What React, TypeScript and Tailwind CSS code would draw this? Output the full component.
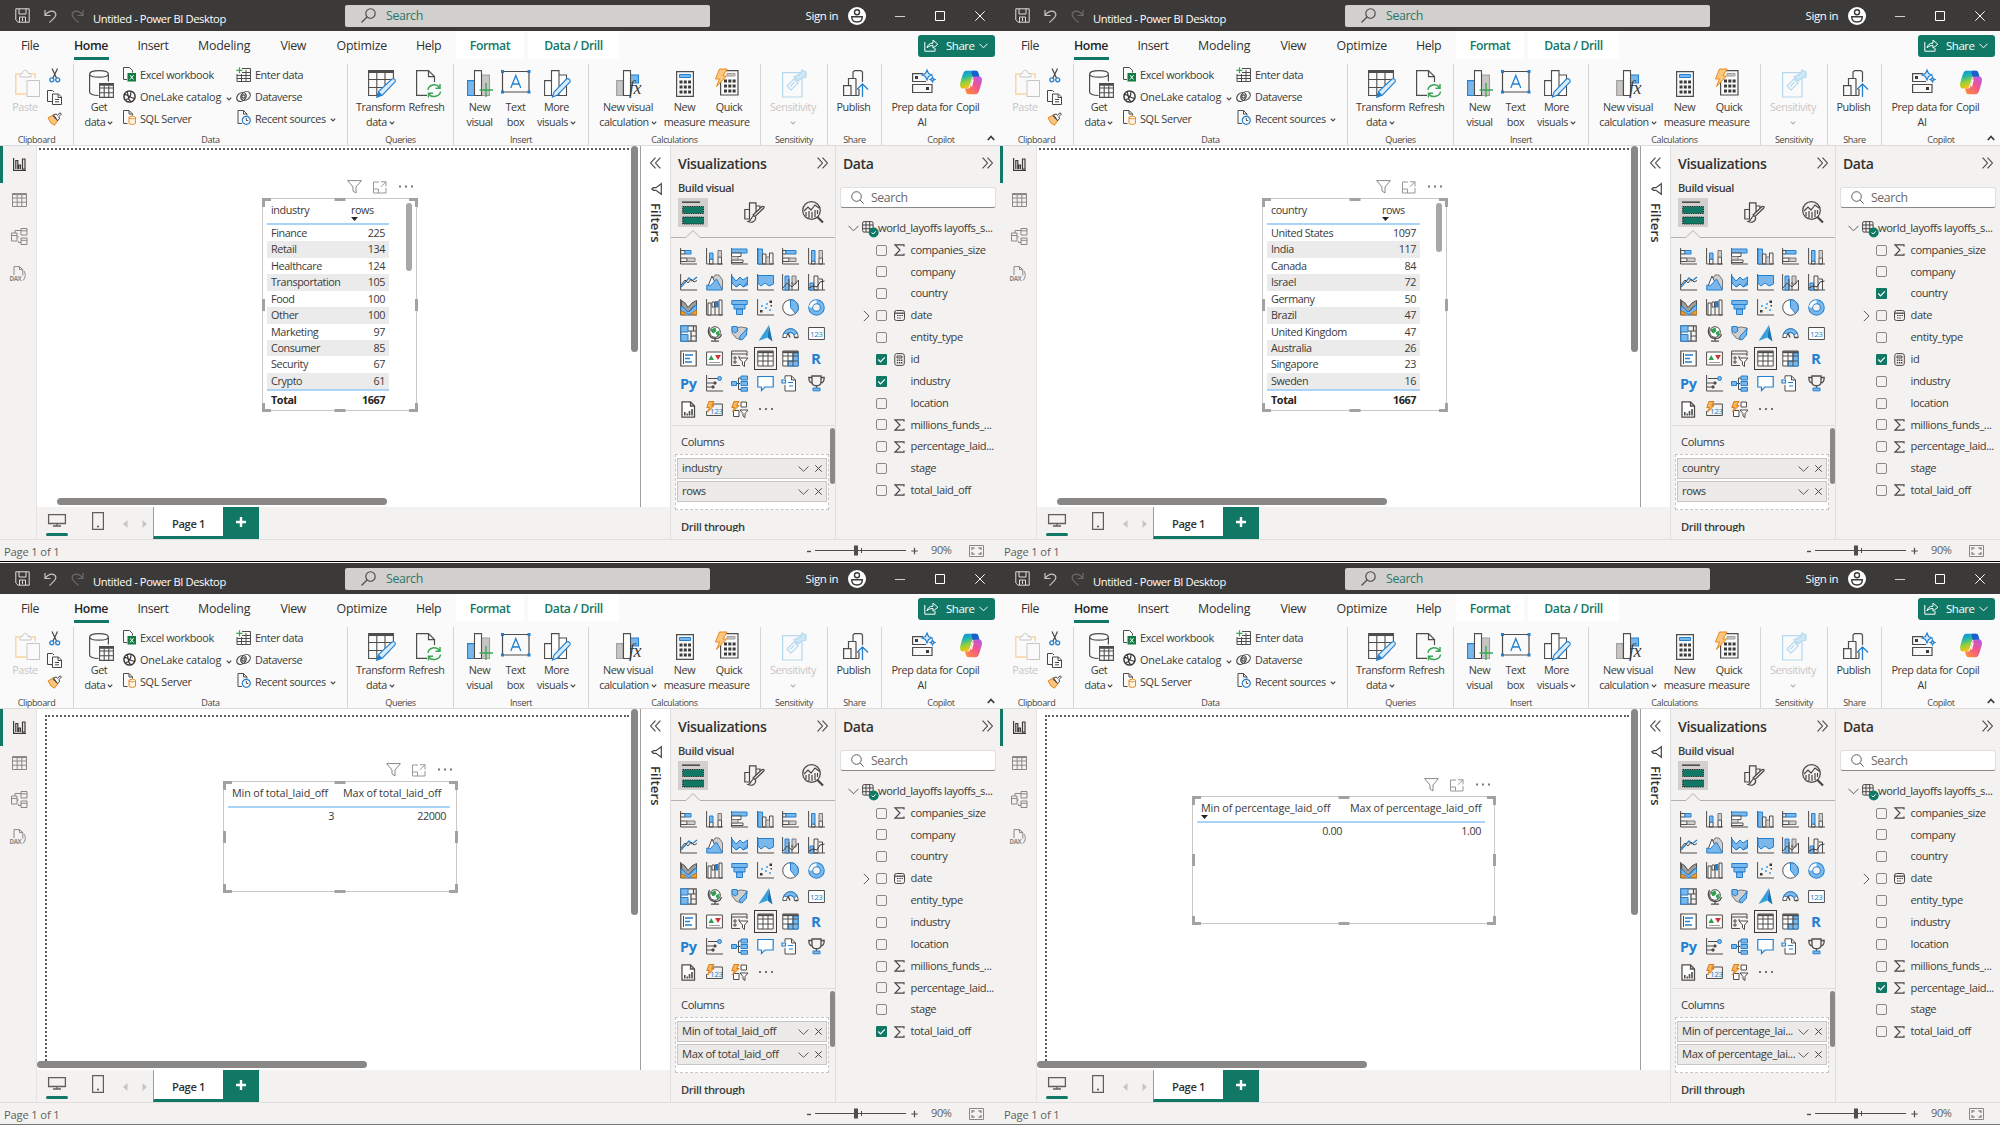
import React from "react";

const G = "#4f4d4b";
const B = "#2380d0";
const L = "#7ab8ec";
const GREEN = "#117865";

type IconProps = { w: number; h: number; vb?: string; className?: string; children: React.ReactNode; s?: string; sw?: number };

function Svg({ w, h, vb, className = "", children, s = G, sw = 1 }: IconProps) {
  return (
    <svg width={w} height={h} viewBox={vb ?? `0 0 ${w} ${h}`} fill="none" stroke={s} strokeWidth={sw} className={`block shrink-0 overflow-visible ${className}`}>
      {children}
    </svg>
  );
}

function Caret({ className = "" }: { className?: string }) {
  return (
    <Svg w={6} h={4} className={className} sw={1.2} s="#484644">
      <path d="M.8.6 3 2.8 5.200.6" />
    </Svg>
  );
}

/* ---------- title bar ---------- */

function TitleBar() {
  return (
    <div className="flex h-[31px] shrink-0 items-center bg-[#3b3a39] text-white">
      <Svg w={15} h={15} s="#e1dfdd" className="ml-[15px]">
        <path d="M.8.8H14.200V14.200H3L.8 12zM4 .8V6H11V.8M4.500 14V9H10.500V14M7.500 9.500V13" />
      </Svg>
      <Svg w={13} h={14} s="#c8c6c4" sw={1.2} className="ml-[14px]">
        <path d="M1 1V6.500H6.500M1.200 6.200C4 2.500 8 .8 10.800 3.200C13.500 6 11 8.500 5.500 13.500" />
      </Svg>
      <Svg w={13} h={14} s="#6d6b69" sw={1.2} className="ml-[14px]">
        <path d="M12 1V6.500H6.500M11.800 6.200C9 2.500 5 .8 2.200 3.200C-.5 6 2 8.500 7.500 13.500" />
      </Svg>
      <div className="ml-[9px] w-[251px] pt-[7px] text-[11.2px] leading-4 tracking-[-0.035em]">Untitled - Power BI Desktop</div>
      <div className="ml-[0.500px] flex h-[22px] w-[365px] items-center rounded-[2px] bg-[#d2d0ce]">
        <Svg w={15} h={15} s="#484644" sw={1.1} className="ml-[16px]">
          <circle cx="9.500" cy="5.500" r="4.700" />
          <path d="M6 9 .5 14.500" />
        </Svg>
        <span className="ml-[10.500px] text-[12.4px] leading-4 text-[#2c7565]">Search</span>
      </div>
      <span className="ml-[96px] w-[42px] text-[11.5px] leading-4">Sign in</span>
      <Svg w={18} h={18} s="#3b3a39" sw={1.4}>
        <circle cx="9" cy="9" r="9" fill="#fff" stroke="none" />
        <circle cx="9" cy="5.300" r="2.500" />
        <path d="M3.700 9.800H14.300C14.300 13.200 12.200 15 9 15S3.700 13.200 3.700 9.800z" />
      </Svg>
      <Svg w={10} h={10} s="#d2d0ce" className="ml-[29px]">
        <path d="M0 5.500H10" />
      </Svg>
      <Svg w={10} h={10} s="#fff" className="ml-[30px]">
        <path d="M.5.5H9.500V9.500H.5z" />
      </Svg>
      <Svg w={10} h={10} s="#fff" className="ml-[30px]">
        <path d="M.3.3 9.700 9.700M9.700.3.3 9.700" />
      </Svg>
    </div>
  );
}

/* ---------- ribbon ---------- */

function Tabs() {
  return (
    <div className="flex h-[31px] shrink-0 items-stretch text-[12.4px] leading-[30px] text-[#323130]">
      <span className="ml-[21px] w-[53px]">File</span>
      <span className="flex w-[35px] flex-col text-[12.3px] font-semibold text-[#252423]">
        <span className="h-[26px]">Home</span>
        <span className="h-[2.500px] w-[35px] bg-[#117865]" />
      </span>
      <span className="ml-[28.500px] w-[60.500px]">Insert</span>
      <span className="w-[82.500px] tracking-[-0.015em]">Modeling</span>
      <span className="w-[56px]">View</span>
      <span className="w-[79.500px] tracking-[-0.015em]">Optimize</span>
      <span className="w-[40px]">Help</span>
      <span className="h-[28px] w-[68px] bg-white text-center text-[12.2px] font-semibold text-[#117865]">Format</span>
      <span className="ml-[4px] h-[28px] w-[91px] bg-white text-center text-[12.2px] font-semibold text-[#117865]">Data / Drill</span>
      <span className="ml-[299px] mt-[3.500px] flex h-[22px] w-[76.500px] items-center rounded-[3px] bg-[#117865] text-[11.4px] leading-5 text-white">
        <Svg w={15} h={13} s="#fff" className="ml-[6px]">
          <path d="M.8 3V12.200H11V9M3 9C3.500 6 5.500 4.200 9 4.200V1L13.800 5.300 9 9.200V6.500C6 6.500 4.200 7.500 3 9z" />
        </Svg>
        <span className="ml-[7px]">Share</span>
        <Svg w={9} h={6} s="#fff" className="ml-[4px]">
          <path d="M.5.8 4.500 4.800 8.500.8" />
        </Svg>
      </span>
    </div>
  );
}

function Big({ icon, a, b, caret, className = "" }: { icon: React.ReactNode; a: string; b?: string; caret?: boolean; className?: string }) {
  return (
    <div className={`flex shrink-0 flex-col items-center ${className}`}>
      <div className="flex h-[30px] items-center justify-center pb-[1px]">{icon}</div>
      <span className="h-[15px] whitespace-nowrap">{a}</span>
      <span className="flex h-[15px] items-center">
        {b}
        {caret && <Caret className={b ? "ml-[2px] mt-[2px]" : "mt-[2px] opacity-40"} />}
      </span>
    </div>
  );
}

function Group({ label, className, children, last }: { label: string; className: string; children: React.ReactNode; last?: boolean }) {
  return (
    <div className={`flex h-[81px] shrink-0 flex-col ${last ? "" : "border-r border-[#d8d6d4]"} ${className}`}>
      <div className="flex h-[69px] shrink-0 items-start pt-[5px]">{children}</div>
      <span className="h-[12px] shrink-0 text-center text-[9.1px] leading-[13px] text-[#484644]">{label}</span>
    </div>
  );
}

function Ribbon() {
  return (
    <div className="flex h-[83px] shrink-0 pt-[2px] text-[10.8px] leading-[15px] text-[#3b3a39]">
      <Group label="Clipboard" className="w-[74px]">
        <div className="ml-[11px] w-[28px] text-center text-[#c8c6c4]">
          <Svg w={25} h={28} s="#c8c6c4" className="mb-[2px] ml-[4px]">
            <path d="M11.500 25H.8V5H4M17 5H20.200V9.500" stroke="#fbd3a0" strokeWidth="1.400" />
            <path d="M5 8V4.500H7.500C7.500 .3 13 .3 13 4.500H16V8z" />
            <path d="M12 11.500H24.500V27.500H12z" fill="#fafafa" />
          </Svg>
          Paste
        </div>
        <div className="-mt-px ml-[8px] flex flex-col gap-[7px]">
          <Svg w={15} h={15} s="#484644">
            <path d="M5 .5 9.500 10M10.500.5 6 10" strokeWidth="1.200" />
            <circle cx="4.800" cy="11.800" r="2" stroke={B} strokeWidth="1.300" />
            <circle cx="10.700" cy="11.800" r="2" stroke={B} strokeWidth="1.300" />
          </Svg>
          <Svg w={15} h={15} s="#484644">
            <path d="M5 11.500H.5V.5H5.500L7 2M5.500 4H11.500L14.500 7V14.500H5.500zM11 4V7.500H14.500M8 9.500H12M8 11.800H12" />
          </Svg>
          <Svg w={15} h={14} s="#484644">
            <path d="M1 6 6 3 10.500 9 7.500 13.200 4 11z" fill="#f9c47e" stroke="#e8891c" />
            <path d="M5.500 3.800 10.500 8.500M6.500 2.800 9 2 10.500 3.200 13 .8 14.500 2 12 4.500 12.500 7 10.500 8.500z" fill="#fafafa" />
          </Svg>
        </div>
      </Group>
      <Group label="Data" className="w-[274px]">
        <Big
          className="ml-[8px] w-[34px]"
          a="Get"
          b="data"
          caret
          icon={
            <Svg w={25} h={28} className="ml-[4px]">
              <path d="M9.500 25.500C4 25.500.6 24 .6 22V4C.6-.5 19.400-.5 19.400 4V11.500M.6 4C.6 8.200 19.400 8.200 19.400 4" strokeWidth="1.200" />
              <path d="M10.600 13.600H24.400V27.400H10.600zM10.600 18H24.400M10.600 22.700H24.400M15.200 16V27.400M19.800 16V27.400" strokeWidth="1.100" fill="#fafafa" />
              <path d="M10.600 14.800H24.400" strokeWidth="2" />
            </Svg>
          }
        />
        <div className="ml-[7px] w-[113px] text-[10.9px]">
          <div className="flex h-[22px] items-start gap-[4px]">
            <Svg w={13} h={15} className="mt-[-2px]">
              <path d="M4 12.500H.5V.5H6.500L9.500 3.500V5.500" />
              <path d="M4.500 6H13V14.500H4.500z" fill="#107c41" stroke="none" />
              <path d="M7 8.200 10.500 12.500M10.500 8.200 7 12.500" stroke="#fff" />
            </Svg>
            <span className="-mt-[2px]">Excel workbook</span>
          </div>
          <div className="flex h-[22px] items-start gap-[4px]">
            <Svg w={13} h={13} className="mt-[-1px]" s="#3b3a39" sw={1.5}>
              <circle cx="6.500" cy="6.500" r="5.600" />
              <path d="M1 5C4 3 6 8 12 8.500M4 1.500C6 5 4 9 8 12M3 9.500C6 9 8 6 8 1.500" strokeWidth="1.200" />
            </Svg>
            <span className="-mt-[2px] whitespace-nowrap tracking-[-0.018em]">OneLake catalog</span>
            <Caret className="ml-[1px] mt-[6px]" />
          </div>
          <div className="flex h-[22px] items-start gap-[4px]">
            <Svg w={13} h={15} className="mt-[-3px]">
              <path d="M4.500 13.500H.5V.5H6L9.500 4V5.500M6 .5V4H9.500" />
              <path d="M6 7.500C6 5.800 12.500 5.800 12.500 7.500V13C12.500 14.800 6 14.800 6 13zC6 9.200 12.500 9.200 12.500 7.500" fill="#fff3e4" stroke="#e8891c" />
            </Svg>
            <span className="-mt-[2px]">SQL Server</span>
          </div>
        </div>
        <div>
          <div className="flex h-[22px] items-start gap-[4px]">
            <Svg w={15} h={15} className="mt-[-2px]">
              <path d="M6 1.500H14.500V14.500H1V7M14.500 5.500H6M14.500 8.500H1M14.500 11.500H1M5.500 7V14.500M10 3V14.500" />
              <path d="M3.500 .3V6.300M.3 3.300H6.500" stroke="#3aa655" strokeWidth="1.200" />
            </Svg>
            <span className="-mt-[2px]">Enter data</span>
          </div>
          <div className="flex h-[22px] items-start gap-[4px]">
            <Svg w={15} h={13} className="mt-[-1px]" s="#484644" sw={1.2}>
              <ellipse cx="5.500" cy="7" rx="5.200" ry="4" transform="rotate(-38 5.500 7)" />
              <ellipse cx="9.500" cy="6" rx="5.200" ry="4" transform="rotate(-38 9.500 6)" />
              <circle cx="7.500" cy="6.500" r="1.700" />
            </Svg>
            <span className="-mt-[2px]">Dataverse</span>
          </div>
          <div className="flex h-[22px] items-start gap-[4px]">
            <Svg w={15} h={15} className="mt-[-3px]">
              <path d="M6 13.500H2V.5H7.500L11 4V5.500M7.500.5V4H11" />
              <circle cx="10.300" cy="10.300" r="4" fill="#fafafa" stroke={B} strokeWidth="1.200" />
              <path d="M10.300 8V10.500H12.200" />
            </Svg>
            <span className="-mt-[2px]">Recent sources</span>
            <Caret className="mt-[5px]" />
          </div>
        </div>
      </Group>
      <Group label="Queries" className="w-[106px]">
        <Big
          className="ml-[8px] w-[49px]"
          a="Transform"
          b="data"
          caret
          icon={
            <Svg w={28} h={28} className="ml-[2px]" sw={1.1}>
              <path d="M9 25.500H.6V.6H25.400V9M.6 9.500H23M.6 17.500H15M8.800 3V25.500M17 3V16" />
              <path d="M.6 2H25.400" strokeWidth="2" />
              <path d="M9 27 11 21 24 9C26.500 8 28 10 27 12L14.500 25z" fill="#d9ecfa" stroke={B} />
              <path d="M9 27 10.500 22 13.500 25z" fill={B} stroke={B} />
            </Svg>
          }
        />
        <Big
          className="ml-[3px] w-[37px]"
          a="Refresh"
          icon={
            <Svg w={25} h={28} sw={1.2} className="ml-[3px]">
              <path d="M11 25.400H.6V.6H12.500L18.500 6.600V12M12.500.6V6.600H18.500" />
              <path d="M12 20C12.500 15 20 12.500 23.500 17.500M24 14V18.200H19.500M24.500 21.500C24 26.500 16 28.500 12.800 24M12.500 27.500V23.300H17" stroke="#3aa655" strokeWidth="1.500" />
            </Svg>
          }
        />
      </Group>
      <Group label="Insert" className="w-[135px]">
        <Big
          className="ml-[11.500px] w-[28px]"
          a="New"
          b="visual"
          icon={
            <Svg w={26} h={28} sw={1.1}>
              <path d="M.6 10.600H7.500V25.500H.6z" fill={L} stroke={B} />
              <path d="M14 5H22.500V25.500H14z" fill="#c8c6c4" stroke="#a19f9d" />
              <path d="M7.500.6H14.500V25.500H7.500z" fill="#fff" />
              <path d="M19 13V27M12.500 20H26" stroke="#3aa655" strokeWidth="1.300" />
            </Svg>
          }
        />
        <Big
          className="ml-[7px] w-[30px]"
          a="Text"
          b="box"
          icon={
            <Svg w={30} h={24} className="mt-[-3px]">
              <path d="M1.500 1.500H28V22H1.500z" strokeWidth="1.200" />
              <path d="M0 0H3V3H0zM26.500 0H29.500V3H26.500zM0 20.500H3V23.500H0zM26.500 20.500H29.500V23.500H26.500z" fill={B} stroke="none" />
              <path d="M9.800 18 14.800 5.500 19.800 18M11.500 14H18" stroke={B} strokeWidth="1.300" />
            </Svg>
          }
        />
        <Big
          className="ml-[5px] w-[42px]"
          a="More"
          b="visuals"
          caret
          icon={
            <Svg w={27} h={28} sw={1.1} className="ml-[2px]">
              <path d="M.6 10.600H7.500V25.500H.6zM7.500.6H15V25.500H7.500zM15 5H22.500V25.500H15z" fill="#fff" />
              <path d="M8.500 27 10 22 22.500 9C25 7.800 27 10 26 12L13.500 25z" fill="#d9ecfa" stroke={B} />
            </Svg>
          }
        />
      </Group>
      <Group label="Calculations" className="w-[172px]">
        <Big
          className="ml-[8px] w-[62px]"
          a="New visual"
          b="calculation"
          caret
          icon={
            <Svg w={26} h={28} className="ml-[2px]" sw={1.1}>
              <path d="M.6 10.600H7V25.500H.6z" fill="#c8c6c4" stroke="#a19f9d" />
              <path d="M14.500 5H22.500V13H14.500z" fill={L} stroke={B} />
              <path d="M7.500.6H14.500V25.500H7.500z" fill="#fff" />
              <text x="13" y="24" stroke="none" fill="#3b3a39" className="font-['Liberation_Serif'] text-[18px] italic">fx</text>
            </Svg>
          }
        />
        <Big
          className="ml-[4.500px] w-[42px]"
          a="New"
          b="measure"
          icon={
            <Svg w={18} h={26}>
              <path d="M.6.6H17.400V25.400H.6z" strokeWidth="1.200" />
              <path d="M3.500 3.500H14.500V6.500H3.500z" fill={L} stroke={B} />
              <path d="M3.500 11H15M3.500 16H15M3.500 21H15" stroke="#3b3a39" strokeWidth="3" strokeDasharray="3 1.300" />
            </Svg>
          }
        />
        <Big
          className="ml-[2px] w-[43px]"
          a="Quick"
          b="measure"
          icon={
            <Svg w={24} h={28} className="ml-[-4px] mt-[-1px]">
              <path d="M5.600 1.600H23V26H5.600z" strokeWidth="1.200" />
              <path d="M12 4.500H20V7H12z" fill="#c8c6c4" stroke="#a19f9d" />
              <path d="M9 12H21M9 17H21M9 22H21" stroke="#3b3a39" strokeWidth="3" strokeDasharray="3 1.300" />
              <path d="M4.500 0H12L8 7H11.500L1.500 17.500 4.500 10H.5z" fill="#fcc77c" stroke="#e8891c" />
            </Svg>
          }
        />
      </Group>
      <Group label="Sensitivity" className="w-[67px]">
        <div className="flex w-[64px] justify-center text-[#c8c6c4]">
          <Big
            a="Sensitivity"
            caret
            icon={
              <Svg w={25} h={28} s="#b5d8ee" className="ml-[3px]" sw={1.2}>
                <path d="M.6 2.600H20V27H.6z" />
                <path d="M5 16 12 9 16 13 9 20z" fill="#fff" />
                <path d="M12 7 16 11 20 8 24 7 24 2 20 0 18 4z" fill="#cfe6f5" />
                <path d="M8 16.500 12.500 12" />
              </Svg>
            }
          />
        </div>
      </Group>
      <Group label="Share" className="w-[54px]">
        <div className="flex w-[51px] justify-center">
          <Big
            a="Publish"
            icon={
              <Svg w={25} h={28} className="ml-[4px]" sw={1.2}>
                <path d="M.6 15.600H8V25.500H.6zM5.500 15V8.500H13M13 8.500V25.500H8M10 8V2L11.500.6H18L19.500 2V12M13 25.500H16M16 19V25.500" />
                <path d="M19.500 27V14M14 19.500 19.500 14 25 19.500" stroke={B} strokeWidth="1.300" />
              </Svg>
            }
          />
        </div>
      </Group>
      <Group label="Copilot" className="w-[118px]" last>
        <Big
          className="ml-[7px] w-[66px]"
          a="Prep data for"
          b="AI"
          icon={
            <Svg w={23} h={24} className="ml-[2px] mt-[-3px]" sw={1.2}>
              <path d="M11 3.600H.6V11.500H14M.6 14.500H20V22.500H.6z" />
              <path d="M3 6H6V9H3zM14 17H17V20H14z" fill="#3b3a39" stroke="none" />
              <path d="M15 0 16.500 3.500 20 5 16.500 6.500 15 10 13.500 6.500 10 5 13.500 3.500zM20.500 7 21.300 8.700 23 9.500 21.300 10.300 20.500 12 19.700 10.300 18 9.500 19.700 8.700z" fill="#d9ecfa" stroke={B} />
            </Svg>
          }
        />
        <div className="ml-[1px] w-[26px]">
          <svg width="22" height="25" viewBox="0 0 22 25" className="mb-[4px] ml-[4px] mt-px block">
            <defs>
              <linearGradient id="cpa" x1="0" y1="0" x2=".3" y2="1">
                <stop offset="0" stopColor="#0a8ce6" />
                <stop offset=".35" stopColor="#22b6b0" />
                <stop offset=".65" stopColor="#8fd03c" />
                <stop offset="1" stopColor="#ffc20e" />
              </linearGradient>
              <linearGradient id="cpb" x1="1" y1="0" x2=".2" y2="1">
                <stop offset="0" stopColor="#b05cf0" />
                <stop offset=".5" stopColor="#f0558c" />
                <stop offset="1" stopColor="#ff8a3c" />
              </linearGradient>
            </defs>
            <path d="M6 .8H16C18.500.8 18.500 4 19.500 6.500H14C12 6.500 11.500 9 10.500 12.500 9.500 17 8.500 18.500 6 18.500H3C-.5 18.500-.3 14.500.8 11 2.500 5.500 3.500.8 6 .8z" fill="url(#cpa)" />
            <path d="M12 .8H16C18.500.8 18.500 4 19.500 7H14C12.500 7 12 5 11.500 3z" fill="#1a5fd0" />
            <path d="M16 24.200H8.500C6 24.200 6 21 5 18.500H8.500C10 18.500 10.800 16 11.500 12.500 12.500 8 13.500 6.500 16 6.500H19C22.500 6.500 22.300 10.500 21.200 14 19.500 19.500 18.500 24.200 16 24.200z" fill="url(#cpb)" />
            <path d="M10.800 15.500 12.500 9.500 13.800 9.500 12 17z" fill="#fff" />
          </svg>
          <span className="block whitespace-nowrap">Copil</span>
        </div>
        <Svg w={8} h={6} s="#3b3a39" sw={1.7} className="ml-[5px] mt-[66px]">
          <path d="M.8 5 4 1.500 7.200 5" />
        </Svg>
      </Group>
    </div>
  );
}

/* ---------- left rail ---------- */

function Rail() {
  return (
    <div className="flex w-[37px] shrink-0 flex-col border-r border-[#e6e4e2] bg-[#f3f2f1]">
      <div className="flex h-[37px] items-center border-l-[3px] border-[#117865]">
        <Svg w={13} h={13} s="#3b3a39" sw={1.2} className="ml-[9.500px]">
          <path d="M.6 0V12.400H13M2.800 11V2.500H4.800V11M5.800 11V7H7.500V11M9.500 11V1H12V11z" />
        </Svg>
      </div>
      <Svg w={15} h={14} s="#8a8886" className="ml-[12px] mt-[10px]">
        <path d="M.5.5H14.500V13.500H.5zM.5 5H14.500M.5 9.200H14.500M5.200 2V13.500M9.800 2V13.500" />
        <path d="M.5 1.200H14.500" strokeWidth="1.800" />
      </Svg>
      <Svg w={17} h={17} s="#8a8886" className="ml-[11px] mt-[21px]">
        <path d="M.5 5H6V13H.5zM.5 7.500H6M10 .5H16V7H10zM10 2.800H16M10 10H16V16.500H10zM10 12.300H16M6 9H7.800M10 2.500H4V5M10 14.500H7.500V13" />
      </Svg>
      <Svg w={17} h={16} s="#8a8886" className="ml-[10px] mt-[20.500px]">
        <path d="M4 9V.6H9.500L12.800 3.600V9.500M9.500 .6V3.600H12.800M14 5C15.800 8 15.800 11 13 14.500" />
        <text x="-.5" y="14.800" stroke="none" fill="#8a8886" className="text-[6.2px] font-bold">DAX</text>
      </Svg>
    </div>
  );
}

/* ---------- canvas visuals ---------- */

type Visual = {
  box: string;
  headers: { text: string; className: string; sorted?: boolean }[];
  rows: [string, string][];
  cols: string;
  total?: string;
  thumb?: string;
  numericOnly?: boolean;
  iconsRight: string;
};

function Frame() {
  return (
    <>
      <div className="absolute -left-[1.500px] -top-[1px] size-[9px] border-l-[3px] border-t-[3px] border-[#a3a2a1]" />
      <div className="absolute -right-[1.500px] -top-[1px] size-[9px] border-r-[3px] border-t-[3px] border-[#a3a2a1]" />
      <div className="absolute -bottom-[1.500px] -left-[1.500px] size-[9px] border-b-[3px] border-l-[3px] border-[#a3a2a1]" />
      <div className="absolute -bottom-[1.500px] -right-[1.500px] size-[9px] border-b-[3px] border-r-[3px] border-[#a3a2a1]" />
      <div className="absolute -top-[1px] left-1/2 h-[3px] w-[11px] -translate-x-1/2 bg-[#a3a2a1]" />
      <div className="absolute -bottom-[1.500px] left-1/2 h-[3px] w-[11px] -translate-x-1/2 bg-[#a3a2a1]" />
      <div className="absolute -left-[1.500px] top-1/2 h-[12px] w-[3px] -translate-y-1/2 bg-[#a3a2a1]" />
      <div className="absolute -right-[1.500px] top-1/2 h-[12px] w-[3px] -translate-y-1/2 bg-[#a3a2a1]" />
    </>
  );
}

function VisualBox({ v }: { v: Visual }) {
  return (
    <div className={`absolute border border-[#c9c8c7] bg-white text-[10.8px] text-[#3b3a39] ${v.box}`}>
      <Frame />
      <div className={`absolute -top-[20px] flex items-center ${v.iconsRight}`}>
        <Svg w={15} h={14} s="#8a8886">
          <path d="M.6.6H14.400L9 7V13L6 11V7z" />
        </Svg>
        <Svg w={14} h={13} s="#9a9896" className="ml-[11px] mt-[2px]">
          <path d="M6 1H.5V12H13V7M.5 8H5.500V12M8 .8H13V5.500M13 .8 8 5.800" />
        </Svg>
        <Svg w={14} h={3} className="ml-[12px]">
          <path d="M0 1.500H2M6 1.500H8M12 1.500H14" stroke="#7a7876" strokeWidth="2" />
        </Svg>
      </div>
      <div className={`ml-[4px] ${v.cols}`}>
        <div className="flex h-[26px] border-b-2 border-[#a9d3f7]">
          {v.headers.map((h) => (
            <div key={h.text} className={`shrink-0 whitespace-nowrap pt-[3px] leading-[15px] ${v.numericOnly ? "text-[10.800px] tracking-[-0.013em]" : ""} ${h.className}`}>
              {h.text}
              {h.sorted && (
                <svg width="7" height="4" viewBox="0 0 7 4" className="block">
                  <path d="M0 0H7L3.500 4z" fill="#252423" />
                </svg>
              )}
            </div>
          ))}
        </div>
        {v.numericOnly
          ? v.rows.map(([a, b]) => (
              <div key={a} className="flex h-[17px] leading-[16px]">
                <span className={`shrink-0 text-right ${v.headers[0].className}`}>{a}</span>
                <span className="flex-1 pr-[4px] text-right">{b}</span>
              </div>
            ))
          : v.rows.map(([a, b], i) => (
              <div key={a} className={`flex h-[16.430px] justify-between px-[4px] leading-[16px] ${i % 2 ? "bg-[#ebebeb]" : ""}`}>
                <span>{a}</span>
                <span>{b}</span>
              </div>
            ))}
        {v.total && (
          <div className="flex h-[19px] items-center justify-between border-t-2 border-[#a9d3f7] px-[4px] font-bold text-[#252423]">
            <span>Total</span>
            <span>{v.total}</span>
          </div>
        )}
      </div>
      {v.thumb && <div className={`absolute right-[4px] top-[4px] w-[6px] rounded-full bg-[#a9a8a7] ${v.thumb}`} />}
    </div>
  );
}

/* ---------- visualizations pane ---------- */

const AX = <path d="M.6 0V16H17" />;
const bl = { fill: L, stroke: B };
const gr = { fill: "#d2d0ce", stroke: "#7a7876" };

const VIZ: React.ReactNode[] = [
  <>{AX}<path d="M.6 2.500H5V6H.6zM.6 10H7V13.500H.6z" /><path d="M5 2.500H11V6H5z" {...bl} /><path d="M7 10H15V13.500H7z" {...gr} /></>,
  <>{AX}<path d="M3.500 11H7V16H3.500zM12 9H15.500V16H12z" /><path d="M3.500 5H7V11H3.500z" {...bl} /><path d="M12 2.500H15.500V9H12z" {...gr} /></>,
  <>{AX}<path d="M.6 1H16V5H.6z" {...bl} /><path d="M.6 5H10V8.500H.6zM.6 12H12V14.500H.6z" fill="#fff" /><path d="M.6 8.500H7V12H.6z" {...gr} /></>,
  <>{AX}<path d="M1 1H5.500V16H1z" {...bl} /><path d="M5.500 6H9V16H5.500zM12.500 5H16V16H12.500z" /><path d="M9 9H12.500V16H9z" {...gr} /></>,
  <>{AX}<path d="M.6 2.500H4V6H.6zM.6 10H7V13.500H.6z" /><path d="M4 2.500H14V6H4z" {...bl} /><path d="M7 10H14V13.500H7z" {...gr} /></>,
  <>{AX}<path d="M3.500 13H7V16H3.500zM11 10H14.500V16H11z" /><path d="M3.500 2.500H7V13H3.500z" {...bl} /><path d="M11 2.500H14.500V10H11z" {...gr} /></>,
  <>{AX}<path d="M1 13 9 4 12 7 17 3" stroke={B} strokeWidth="1.300" /><path d="M1 11 5 6 8 9 11 5 14 8 17 6.500" /></>,
  <><path d="M1 15 9 1 13 1 16.500 6V15z" {...gr} /><path d="M1 15 6 2 12 15z" fill="#fff" /><path d="M.8 16V11L4 12 10.500 5 16.500 16z" {...bl} /></>,
  <>{AX}<path d="M1 2 5 7 9 3 12 6 16.500 3V11L12 13 9 10 5 13 1 9z" {...bl} /><path d="M1 9 5 13 9 10 12 13 16.500 8" stroke={B} /></>,
  <>{AX}<path d="M1 1.500H16.500V10L12 12 8 9 4 12 1 9z" {...bl} /></>,
  <>{AX}<path d="M3 2H7V16H3z" {...bl} /><path d="M10 2H14V10H10z" {...gr} /><path d="M10 8V16M7 5V16M1 14 5 9 10 13 16.500 6V16" /></>,
  <>{AX}<path d="M2 9H5.500V16H2z" {...bl} /><path d="M6 2H10V16H6zM11 5H14.500V16" /><path d="M1 14 5 12 9 13 12 8 16.500 7" stroke="#3b3a39" /></>,
  <>{AX}<path d="M1.500 1.500 5 4 8 8.500 12 4 16.500 1.500V6L13 8 9 12.500H7L4 9 1.500 7z" fill="#a19f9d" /><path d="M1 7 4 9 7 12.500H10L13 8.500 16.500 6V11L12 14 9 15.500 4 13 1 12z" {...bl} /><path d="M1 12 4 13 5.500 15.500H1zM12.500 13.500 16.500 11V15.500H11.500z" fill="#f0a030" stroke="#c87818" /></>,
  <>{AX}<path d="M2 4H5V16H2zM6 3H8.500V8H6z" fill="#fff" /><path d="M9.500 2.500H12V8H9.500z" fill={B} stroke={B} /><path d="M9 8V16M13 1H16V16H13z" /></>,
  <><path d="M.8 1.500H16.200V5.500H.8zM3 5.500H14V10H3zM5.500 10H11.500V15.500H5.500z" {...bl} /></>,
  <>{AX}<path d="M4 6H6V8H4zM8 8H10V10H8zM12 10H14V12H12zM9 4H11V6H9z" fill="#66b2ec" stroke="none" /><path d="M12.500 1.500H15V4H12.500zM3 11H5.500V13.500H3zM13.500 6H15V7.500H13.500z" fill="#3b3a39" stroke="none" /></>,
  <><circle cx="8.500" cy="8.500" r="7.800" fill="#fff" /><path d="M8.500.7A7.800 7.800 0 0 1 13.500 14.500L8.500 8.500z" {...bl} /></>,
  <><circle cx="8.500" cy="8.500" r="5.800" stroke={B} strokeWidth="5" /><circle cx="8.500" cy="8.500" r="5.800" stroke={L} strokeWidth="3" /><path d="M2.700 8.500A5.800 5.800 0 0 1 8.500 2.700" stroke="#fff" strokeWidth="3" /></>,
  <><path d="M.8.8H16.200V16.200H.8zM8 6H16M11 6V16M11 11H16M13.500.8V6" strokeWidth="1.200" /><path d="M.8.8H8V7H.8zM.8 9.500H8V16.200H.8z" {...bl} /></>,
  <><circle cx="9" cy="7" r="5.300" fill="#fff" /><path d="M5 5 9 3 10 6 7 8zM10 8 13 6 12 11z" fill="#2f9e4f" stroke="#2f9e4f" /><path d="M3.500 2C1 7 3 13 9 13.500S15 10 15.500 9M9 13.500V16M5 16.200H13" strokeWidth="1.300" /></>,
  <><path d="M1 2 5 3 10 2 16 3 15 10 10 15 5 13 1 8z" {...gr} /><path d="M1 1.500H6L7 6 4 8 1 6zM10 10 14 6 16 3 15.500 10 11 15 8 13z" {...bl} /></>,
  <><path d="M12 0 1.500 16 10.500 12.500z" fill="#38a0dc" stroke="none" /><path d="M12 0 10.500 12.500 15.500 16.500z" fill="#1873b4" stroke="none" /></>,
  <><path d="M.8 12.500C1 1 16 1 16.200 12.500H12.500C12 6 5 6 4.500 12.500z" fill="#fff" /><path d="M2 8C4 3 12 1.500 15 8L12 10C11 7 7 6.500 5.500 9z" {...bl} /><path d="M8 12.500 6 8M16 12.500H12.500" strokeWidth="1.400" /></>,
  <><path d="M.6 2.500H16.400V14.500H.6z" fill="#fff" /><text x="2" y="11.800" fill={B} stroke="none" className="text-[8px]">123</text></>,
  <><path d="M.8 1H16.200V16H.8z" fill="#fff" strokeWidth="1.200" /><path d="M3.500 3V14" /><path d="M5 5H13M5 8.500H10M5 12H12" stroke={B} strokeWidth="1.600" /></>,
  <><path d="M.6 2H16.400V15H.6z" fill="#fff" /><path d="M2.500 10 5.200 5 8 10z" fill="#2f9e4f" stroke="none" /><path d="M9 5H15L12 10z" fill="#d13438" stroke="none" /><path d="M3 12.500H14" stroke="#a19f9d" /></>,
  <><path d="M9 15.500H.6V1H16V6M.6 4H16" /><path d="M3 7H5V9H3zM3 11H5V13H3zM7 7H9" /><path d="M8 8H17L13.500 12V16.500L11.500 15V12z" fill="#fff" /></>,
  <><path d="M.8 1H16.200V16H.8zM.8 6H16.200M.8 11H16.200M6 3V16M11 3V16" fill="#fff" /><path d="M.8 2.200H16.200" strokeWidth="2" /></>,
  <><path d="M.8 1H16.200V16H.8z" fill="#fff" /><path d="M11 3H16.200V16H6V11H11z" {...bl} /><path d="M.8 6H16.200M.8 11H16.200M6 3V16M11 3V16" /><path d="M.8 2.200H16.200" strokeWidth="2" /></>,
  <><text x="3" y="14" fill={B} stroke="none" className="text-[15px] font-bold">R</text></>,
  <><text x="0" y="13.500" fill={B} stroke="none" className="text-[14.5px] font-bold">Py</text></>,
  <>{AX}<path d="M2 3.500H12M1 8H8M1 12H6" /><circle cx="13.500" cy="3.500" r="2" {...bl} /><circle cx="9" cy="8" r="1.200" fill={G} /><circle cx="7" cy="12" r="1.200" fill={G} /></>,
  <><path d="M5 8.500H9M7.500 3V14.500H10M7.500 3H10" /><path d="M.5 6.500H5.500V10.500H.5zM10 1H16.500V5H10zM10 6.500H16.500V10.500H10zM10 12.500H16.500V16.200H10z" {...bl} /></>,
  <><path d="M.8 1.500H16.200V12H8L4.500 15.500V12H.8z" fill="#fff" stroke={B} strokeWidth="1.200" /></>,
  <><path d="M3 4V.8H9.500L13.500 5V16H3V10M9.500.8V5H13.500" fill="#fff" /><path d="M0 5H3.500V8H0zM6 7.500H11M7 11H11" stroke={B} strokeWidth="1.200" /></>,
  <><path d="M4 1H13V7C13 12 4 12 4 7zM4 2.500H.8C.8 6 2 8 4.500 8M13 2.500H16.200C16.200 6 15 8 12.500 8M8.500 11V14" strokeWidth="1.300" /><path d="M5 13H12V15.800H5z" {...bl} /></>,
  <><path d="M2 .8H10.500L14.500 5V16.200H2zM10.500.8V5H14.500" strokeWidth="1.300" fill="#fff" /><path d="M4.800 11V14.500M7.300 12.500V14.500M9.500 10V14.500M12 8V14.500" strokeWidth="1.600" /></>,
  <><path d="M5 3H16.400V14.500H.6V10" /><text x="4" y="12.500" fill={B} stroke="none" className="text-[8px]">123</text><path d="M3 .5H8L5.500 4.500H8L1.500 11 3.500 6.500H.8z" fill="#fcb55c" stroke="#d97b10" /></>,
  <><path d="M10 1H15.500V6H10zM2.500 9.500H8V15.500H2.500z" fill="#fff" /><path d="M9 9H17L14 12.500V16.500L12 15V12.500z" fill="#fff" /><path d="M3 .5H8L5.500 4.500H8L1.500 11 3.500 6.500H.8z" fill="#fcb55c" stroke="#d97b10" /></>,
  <><path d="M2 8H4M8 8H10M14 8H16" stroke="#484644" strokeWidth="1.600" /></>,
];

function DoubleChevron({ flip, className = "" }: { flip?: boolean; className?: string }) {
  return (
    <Svg w={11} h={12} s="#484644" sw={1.1} className={`${flip ? "rotate-180" : ""} ${className}`}>
      <path d="M.6.6 5.500 6 .6 11.400M5.500.6 10.400 6 5.500 11.400" />
    </Svg>
  );
}

function FiltersRail() {
  return (
    <div className="flex w-[29px] shrink-0 flex-col items-center bg-white">
      <DoubleChevron flip className="mt-[11px]" />
      <Svg w={11} h={12} s="#484644" sw={1.2} className="ml-[2px] mt-[14px]">
        <path d="M10.300.8V11.200L5 7.300H2.500L.8 5.800 2.500 4.700H5z" />
      </Svg>
      <span className="mt-[8px] text-[13px] font-semibold leading-[16px] tracking-[0.01em] text-[#323130] [writing-mode:vertical-rl]">Filters</span>
    </div>
  );
}

function VizPane({ wells }: { wells: string[] }) {
  return (
    <div className="flex w-[165px] shrink-0 flex-col overflow-hidden border-l border-[#e1dfdd] bg-[#f3f2f1] text-[#3b3a39]">
      <div className="flex items-center justify-between pl-[7px] pr-[7px] pt-[8px]">
        <span className="text-[14.2px] font-semibold leading-[20px] text-[#323130]">Visualizations</span>
        <DoubleChevron className="mt-[-3px]" />
      </div>
      <span className="ml-[7px] mt-[6px] text-[11px] font-semibold leading-[15px]">Build visual</span>
      <div className="mt-[2px] flex h-[30px] items-center">
        <div className="ml-[7px] flex h-[29px] w-[30px] flex-col items-center bg-[#d2d0ce] pt-[3px]">
          <Svg w={22} h={24}>
            <path d="M0 1.200H18" strokeWidth="1.600" />
            <path d="M.7 5.500H21.500V12.500H.7zM.7 16H21.500V23H.7z" fill={GREEN} stroke="#252423" strokeDasharray="1.300 1" />
          </Svg>
        </div>
        <Svg w={21} h={21} s="#484644" sw={1.2} className="ml-[35.500px]">
          <path d="M.8 17V7.500H5.500V17zM5.500 7.500V.8H12V11M12 4H16V6" />
          <path d="M19.800 6 11 14.500 9 13 17.500 5C19 3.800 21 4.500 19.800 6zM10 14C7 14 8 18.500 4 19.500 8 21.500 12.500 19 11.500 15" fill="#f3f2f1" />
        </Svg>
        <Svg w={22} h={22} s="#484644" sw={1.2} className="ml-[37px]">
          <circle cx="9.500" cy="9.500" r="8.800" />
          <path d="M2 10 6 6 9 9 13 4 17 7M4 11V15M7 10V17M10 11V17M13 9V16M15.500 9V13" />
          <path d="M15.500 16 21 21.500" strokeWidth="2.200" />
        </Svg>
      </div>
      <Svg w={165} h={11} s="#b3b0ad">
        <path d="M0 10.500H15L22 3.500 29 10.500H165" />
      </Svg>
      <div className="ml-[5px] mt-[6px] grid w-[153px] grid-cols-6">
        {VIZ.map((icon, i) => (
          <div key={i} className="flex h-[25.450px] w-[25.500px] items-center justify-center">
            <div className={i === 27 ? "border border-[#3b3a39] p-[2px]" : ""}>
              <Svg w={17} h={17}>{icon}</Svg>
            </div>
          </div>
        ))}
      </div>
      <div className="mt-[3px] flex h-[113px] border-t border-[#e1dfdd]">
        <div className="ml-[4px] flex w-[154px] flex-col overflow-hidden">
          <span className="ml-[6px] mt-[8px] text-[11.200px] leading-[16px]">Columns</span>
          <div className="mt-[4px] flex h-[56px] w-[154px] shrink-0 flex-col gap-[2px] border border-dashed border-[#c8c6c4] bg-white px-[1px] pt-[3px]">
            {wells.map((w) => (
              <div key={w} className="flex h-[21px] shrink-0 items-center border border-[#c8c6c4] bg-[#ebeae8] pl-[4px] text-[11.200px]">
                <span className="w-[116px] whitespace-nowrap">{w}</span>
                <Svg w={11} h={6} s="#605e5c"><path d="M.5.5 5.500 5.300 10.500.5" /></Svg>
                <Svg w={7} h={7} s="#484644" className="ml-[6px]"><path d="M.3.3 6.700 6.700M6.700.3.3 6.700" /></Svg>
              </div>
            ))}
          </div>
          <span className="ml-[6px] mt-[9px] h-[13px] shrink-0 overflow-hidden text-[11.200px] font-semibold leading-[16px]">Drill through</span>
        </div>
        <div className="ml-px mt-[2px] h-[56px] w-[5px] rounded-full bg-[#8a8886]" />
      </div>
    </div>
  );
}

/* ---------- data pane ---------- */

type Field = { name: string; kind?: "sum" | "date" | "calc" };

const FIELDS: Field[] = [
  { name: "companies_size", kind: "sum" },
  { name: "company" },
  { name: "country" },
  { name: "date", kind: "date" },
  { name: "entity_type" },
  { name: "id", kind: "calc" },
  { name: "industry" },
  { name: "location" },
  { name: "millions_funds_...", kind: "sum" },
  { name: "percentage_laid...", kind: "sum" },
  { name: "stage" },
  { name: "total_laid_off", kind: "sum" },
];

function KindIcon({ kind }: { kind?: Field["kind"] }) {
  if (kind === "sum") return <Svg w={11} h={12} s="#484644" sw={1.2}><path d="M10 2.500V.8H1L6 6 1 11.200H10V9.500" /></Svg>;
  if (kind === "date")
    return <Svg w={11} h={11} s="#484644"><rect x=".5" y=".5" width="10" height="10" rx="2" /><path d="M.5 3.200H10.500M3 5.500H9M3 8H7" strokeDasharray="1.500 .8" /><path d="M.5 3.200H10.500" /></Svg>;
  if (kind === "calc")
    return <Svg w={11} h={13} s="#484644"><rect x=".8" y=".6" width="9.500" height="11.800" rx="2" /><path d="M3 3H8V5H3z" /><path d="M2.800 7.300H8.500M2.800 9.800H8.500" strokeWidth="1.400" strokeDasharray="1.400 .7" /></Svg>;
  return null;
}

function DataPane({ checked, hasId }: { checked: string[]; hasId: boolean }) {
  return (
    <div className="flex w-[165px] shrink-0 flex-col overflow-hidden border-l border-[#e1dfdd] bg-[#f3f2f1] text-[#3b3a39]">
      <div className="flex items-center justify-between pl-[7px] pr-[7.500px] pt-[8px]">
        <span className="text-[14px] font-semibold leading-[20px] text-[#323130]">Data</span>
        <DoubleChevron className="mt-[-3px]" />
      </div>
      <div className="ml-[4px] mt-[13px] flex h-[21px] w-[156px] items-center rounded-[3px] border border-[#e1dfdd] border-b-[#8a8886] bg-white">
        <Svg w={13} h={13} s="#605e5c" className="ml-[10px]"><circle cx="5.500" cy="5.500" r="4.800" /><path d="M9 9 12.600 12.600" /></Svg>
        <span className="ml-[7px] text-[12.3px] leading-4 text-[#6b6967]">Search</span>
      </div>
      <div className="mt-[9.200px] flex h-[22px] items-center text-[11.200px]">
        <Svg w={11} h={7} s="#605e5c" className="ml-[12px]"><path d="M.5.8 5.500 5.800 10.500.8" /></Svg>
        <Svg w={16} h={16} s="#484644" className="ml-[3px] mt-[4px]">
          <rect x=".6" y="-.4" width="10.500" height="10.500" rx="1.500" />
          <path d="M.6 3H11M.6 6.700H11M4 0V10M7.700 0V10" />
          <circle cx="11.700" cy="10.500" r="5" fill={GREEN} stroke="none" />
          <path d="M9.700 10.500 11.200 12 13.800 9.300" stroke="#fff" />
        </Svg>
        <span className="whitespace-nowrap">world_layoffs layoffs_s...</span>
      </div>
      {FIELDS.filter((f) => hasId || f.name !== "id").map((f) => (
        <div key={f.name} className="flex h-[21.850px] shrink-0 items-center text-[11.100px]">
          <span className="flex w-[40px] justify-center pl-[21px]">
            {f.name === "date" && <Svg w={7} h={12} s="#605e5c"><path d="M.8.8 6 6 .8 11.200" /></Svg>}
          </span>
          {checked.includes(f.name) ? (
            <Svg w={11} h={11}><rect width="11" height="11" rx="1" fill={GREEN} stroke="none" /><path d="M2.300 5.500 4.500 7.800 8.800 3.300" stroke="#fff" strokeWidth="1.200" /></Svg>
          ) : (
            <span className="size-[11px] rounded-[2px] border border-[#8a8886]" />
          )}
          <span className="ml-[6.500px] flex w-[17px]"><KindIcon kind={f.kind} /></span>
          <span className="whitespace-nowrap">{f.name}</span>
        </div>
      ))}
    </div>
  );
}

/* ---------- bottom bars ---------- */

function PageBar() {
  return (
    <div className="flex h-[32px] shrink-0 bg-[#f3f2f1]">
      <div className="ml-[9px] flex w-[22px] flex-col items-center pt-[7px]">
        <Svg w={18} h={13} s="#605e5c" sw={1.3}><path d="M.6.6H17.400V9.500H.6zM5 12H13M9 9.500V12" /></Svg>
        <span className="mt-[5.500px] h-[3px] w-[22px] rounded-full bg-[#117865]" />
      </div>
      <Svg w={12} h={18} s="#605e5c" sw={1.2} className="ml-[24px] mt-[4.500px]"><path d="M.6.6H11.400V17.400H.6z" /><circle cx="6" cy="14.500" r=".5" /></Svg>
      <svg width="24" height="8" viewBox="0 0 24 8" className="ml-[19px] mt-[12.500px]"><path d="M4.500 0V8L0 4zM19.500 0V8L24 4z" fill="#c8c6c4" /></svg>
      <div className="ml-[6px] w-[70px] border-b-[3.500px] border-l border-b-[#117865] border-l-[#a19f9d] bg-white text-center text-[11.200px] font-semibold leading-[34px] text-[#323130]">Page 1</div>
      <div className="flex w-[36px] items-center justify-center bg-[#117865] pb-[2px]">
        <Svg w={10} h={10} s="#fff" sw={2.4}><path d="M5 0V10M0 5H10" /></Svg>
      </div>
    </div>
  );
}

function StatusBar() {
  return (
    <div className="flex h-[22px] shrink-0 items-center border-t border-[#e1dfdd] bg-[#f3f2f1] text-[#605e5c]">
      <span className="ml-[4px] mt-[3px] w-[803px] text-[11.200px] tracking-[-0.015em]">Page 1 of 1</span>
      <Svg w={4} h={10}><path d="M0 5.500H4" strokeWidth="1.400" /></Svg>
      <Svg w={92} h={11} className="ml-[4px]"><path d="M0 5.500H91M46.500 3V8" /><path d="M41 .5V10.500" strokeWidth="4" /></Svg>
      <Svg w={7} h={8} className="ml-[4px]" sw={1.2}><path d="M3.500.8V7.300M.3 4H6.800" /></Svg>
      <span className="ml-[13px] w-[38px] text-[11px]">90%</span>
      <Svg w={15} h={12} s="#8a8886"><path d="M.5.5H14.500V11.500H.5z" /><path d="M3 5V3H5.500M9.500 3H12V5M12 7V9H9.500M5.500 9H3V7" strokeWidth="1.300" /></Svg>
    </div>
  );
}

/* ---------- window ---------- */

type WindowProps = { visual: Visual; wells: string[]; checked: string[]; hasId: boolean; corner?: boolean; tail: string };

function PowerBIWindow({ visual, wells, checked, hasId, corner, tail }: WindowProps) {
  return (
    <div className="flex h-full w-[1000px] flex-col overflow-hidden bg-[#f3f2f1]">
      <TitleBar />
      <div className="flex h-[115px] shrink-0 flex-col border-b border-[#dddbd9] bg-[#fafafa]">
        <Tabs />
        <Ribbon />
      </div>
      <div className="flex h-[393px] shrink-0">
        <Rail />
        <div className="flex w-[633px] shrink-0 flex-col">
          <div className="flex h-[361px]">
            <div className="relative w-[604px] shrink-0 overflow-hidden border-r border-[#a19f9d] bg-white">
              {corner ? (
                <div className="absolute bottom-[9px] left-[8px] right-[11px] top-[6px] border-l-2 border-t-2 border-dotted border-[#605e5c]" />
              ) : (
                <div className="absolute left-[2px] right-[11px] top-[2px] border-t-2 border-dotted border-[#605e5c]" />
              )}
              <VisualBox v={visual} />
              <div className="absolute right-[2px] top-0 h-[206px] w-[7px] rounded-full bg-[#8a8886]" />
              <div className={`absolute bottom-[2px] h-[7px] w-[330px] rounded-full bg-[#8a8886] ${corner ? "left-0" : "left-[20px]"}`} />
            </div>
            <FiltersRail />
          </div>
          <PageBar />
        </div>
        <VizPane wells={wells} />
        <DataPane checked={checked} hasId={hasId} />
      </div>
      <StatusBar />
      <div className={`flex-1 ${tail}`} />
    </div>
  );
}

const INDUSTRY: Visual = {
  box: "left-[225px] top-[52px] h-[213px] w-[155px]",
  iconsRight: "right-[3px]",
  cols: "w-[122px]",
  headers: [
    { text: "industry", className: "w-[84px] pl-[4px]" },
    { text: "rows", className: "", sorted: true },
  ],
  rows: [
    ["Finance", "225"],
    ["Retail", "134"],
    ["Healthcare", "124"],
    ["Transportation", "105"],
    ["Food", "100"],
    ["Other", "100"],
    ["Marketing", "97"],
    ["Consumer", "85"],
    ["Security", "67"],
    ["Crypto", "61"],
  ],
  total: "1667",
  thumb: "h-[68px]",
};

const COUNTRY: Visual = {
  box: "left-[225px] top-[52px] h-[213px] w-[185px]",
  iconsRight: "right-[4px]",
  cols: "w-[153px]",
  headers: [
    { text: "country", className: "w-[115px] pl-[4px]" },
    { text: "rows", className: "", sorted: true },
  ],
  rows: [
    ["United States", "1097"],
    ["India", "117"],
    ["Canada", "84"],
    ["Israel", "72"],
    ["Germany", "50"],
    ["Brazil", "47"],
    ["United Kingdom", "47"],
    ["Australia", "26"],
    ["Singapore", "23"],
    ["Sweden", "16"],
  ],
  total: "1667",
  thumb: "h-[49px]",
};

const TOTALS: Visual = {
  box: "left-[186px] top-[72px] h-[111px] w-[234px]",
  iconsRight: "right-[4px]",
  cols: "w-[222px]",
  headers: [
    { text: "Min of total_laid_off", className: "w-[106px] pl-[4px]" },
    { text: "Max of total_laid_off", className: "pl-[9px]" },
  ],
  rows: [["3", "22000"]],
  numericOnly: true,
};

const PERCENT: Visual = {
  box: "left-[155px] top-[87px] h-[128px] w-[303px]",
  iconsRight: "right-[4px]",
  cols: "w-[288px]",
  headers: [
    { text: "Min of percentage_laid_off", className: "w-[145px] pl-[4px]", sorted: true },
    { text: "Max of percentage_laid_off", className: "pl-[8px]" },
  ],
  rows: [["0.00", "1.00"]],
  numericOnly: true,
};

export default function App() {
  return (
    <div className="grid h-[1125px] w-[2000px] grid-cols-[1000px_1000px] grid-rows-[563px_562px] overflow-hidden font-['Open_Sans','Noto_Sans',sans-serif] tracking-[-0.025em]">
      <PowerBIWindow visual={INDUSTRY} wells={["industry", "rows"]} checked={["id", "industry"]} hasId tail="border-b border-white bg-black" />
      <PowerBIWindow visual={COUNTRY} wells={["country", "rows"]} checked={["id", "country"]} hasId tail="border-b border-white bg-black" />
      <PowerBIWindow visual={TOTALS} wells={["Min of total_laid_off", "Max of total_laid_off"]} checked={["total_laid_off"]} hasId={false} corner tail="bg-[#777675]" />
      <PowerBIWindow visual={PERCENT} wells={["Min of percentage_lai...", "Max of percentage_lai..."]} checked={["percentage_laid..."]} hasId={false} corner tail="bg-[#777675]" />
    </div>
  );
}
